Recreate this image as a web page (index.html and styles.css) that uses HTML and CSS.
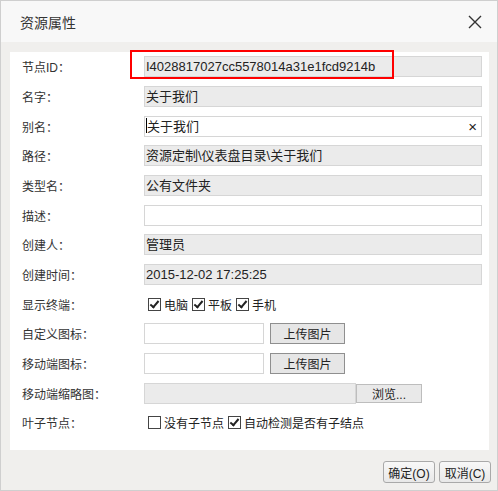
FILE: index.html
```html
<!DOCTYPE html>
<html lang="zh-CN">
<head>
    <meta charset="UTF-8">
    <meta name="viewport" content="width=device-width, initial-scale=1.0">
    <title>资源属性</title>
    <link rel="stylesheet" href="styles.css">
</head>
<body>
    <div class="dialog">
        <div class="dialog-header">
            <span class="dialog-title">资源属性</span>
            <svg class="close-icon" width="14" height="14" viewBox="0 0 14 14">
                <path d="M1 1 L13 13 M13 1 L1 13" stroke="#333" stroke-width="1.4" fill="none"/>
            </svg>
        </div>

        <div class="dialog-body">
            <div class="row">
                <label>节点ID：</label>
                <div class="field readonly">I4028817027cc5578014a31e1fcd9214b</div>
            </div>
            <div class="row">
                <label>名字：</label>
                <div class="field readonly">关于我们</div>
            </div>
            <div class="row">
                <label>别名：</label>
                <div class="field editable"><span class="caret"></span>关于我们<span class="clear">×</span></div>
            </div>
            <div class="row">
                <label>路径：</label>
                <div class="field readonly">资源定制\仪表盘目录\关于我们</div>
            </div>
            <div class="row">
                <label>类型名：</label>
                <div class="field readonly">公有文件夹</div>
            </div>
            <div class="row">
                <label>描述：</label>
                <div class="field editable"></div>
            </div>
            <div class="row">
                <label>创建人：</label>
                <div class="field readonly">管理员</div>
            </div>
            <div class="row">
                <label>创建时间：</label>
                <div class="field readonly">2015-12-02 17:25:25</div>
            </div>
            <div class="row">
                <label>显示终端：</label>
                <div class="checks">
                    <span class="check checked"></span><span class="check-text">电脑</span>
                    <span class="check checked"></span><span class="check-text">平板</span>
                    <span class="check checked"></span><span class="check-text">手机</span>
                </div>
            </div>
            <div class="row">
                <label>自定义图标：</label>
                <div class="field editable short"></div>
                <button class="btn-upload">上传图片</button>
            </div>
            <div class="row">
                <label>移动端图标：</label>
                <div class="field editable short"></div>
                <button class="btn-upload">上传图片</button>
            </div>
            <div class="row">
                <label>移动端缩略图：</label>
                <div class="field readonly thumb"></div>
                <button class="btn-browse">浏览...</button>
            </div>
            <div class="row">
                <label>叶子节点：</label>
                <div class="checks">
                    <span class="check"></span><span class="check-text">没有子节点</span>
                    <span class="check checked"></span><span class="check-text">自动检测是否有子结点</span>
                </div>
            </div>
        </div>

        <div class="dialog-footer">
            <button class="btn">确定(O)</button>
            <button class="btn">取消(C)</button>
        </div>

        <div class="highlight"></div>
    </div>
</body>
</html>
```

FILE: styles.css
```css
body {
    margin: 0;
    font-family: "Liberation Sans", "Noto Sans CJK SC", sans-serif;
    color: #333;
}

.dialog {
    position: relative;
    width: 498px;
    height: 491px;
    box-sizing: border-box;
    border: 1px solid #cfcfcf;
    background: #f0efed;
}

.dialog-header {
    height: 41px;
    background: #f8f8f8;
    display: flex;
    align-items: center;
    justify-content: space-between;
    padding: 0 15px 0 19px;
}

.dialog-title {
    font-size: 14px;
    color: #333;
}

.close-icon {
    display: block;
}

.dialog-body {
    margin: 10px 8px 0 9px;
    height: 398px;
    background: #fff;
    padding: 0 7px 0 12px;
    box-sizing: border-box;
}

.row {
    height: 29.67px;
    display: flex;
    align-items: center;
}

.row label {
    width: 122px;
    flex-shrink: 0;
    font-size: 12px;
    color: #333;
}

.field {
    flex: 1;
    height: 21px;
    box-sizing: border-box;
    border: 1px solid #d6d6d6;
    font-size: 13px;
    line-height: 19px;
    padding-left: 1px;
    color: #222;
    position: relative;
    white-space: nowrap;
}

.readonly {
    background: #ebebeb;
}

.editable {
    background: #fff;
}

.caret {
    display: inline-block;
    width: 1px;
    height: 15px;
    background: #000;
    vertical-align: -2px;
}

.clear {
    position: absolute;
    right: 4px;
    top: 0;
    font-size: 15px;
    color: #222;
}

.field.short {
    flex: none;
    width: 120px;
}

.field.thumb {
    flex: none;
    width: 212px;
}

.btn-upload {
    margin-left: 6px;
    width: 75px;
    height: 21px;
    border: 1px solid #8f8f8f;
    background: #e6e6e6;
    font-family: inherit;
    font-size: 12px;
    color: #222;
    padding: 0;
}

.btn-browse {
    width: 66px;
    height: 19px;
    border: 1px solid #bdbdbd;
    background: #e9e9e9;
    font-family: inherit;
    font-size: 12px;
    color: #222;
    padding: 0;
}

.checks {
    display: flex;
    align-items: center;
    padding-left: 4px;
    font-size: 12px;
    color: #222;
}

.check {
    width: 11px;
    height: 11px;
    border: 1px solid #444;
    background: #fff;
    margin-right: 3px;
    position: relative;
}

.check.checked:after {
    content: "";
    position: absolute;
    left: 3px;
    top: 0;
    width: 3px;
    height: 7px;
    border: solid #222;
    border-width: 0 2px 2px 0;
    transform: rotate(40deg);
}

.check-text {
    margin-right: 4px;
}

.dialog-footer {
    display: flex;
    justify-content: flex-end;
    gap: 4px;
    padding: 11px 6px 0 0;
}

.btn {
    width: 52px;
    height: 22px;
    padding: 0;
    border: 1px solid #a9a9a9;
    border-radius: 3px;
    background: linear-gradient(#f8f8f8, #e8e8e8);
    font-family: inherit;
    font-size: 12px;
    color: #222;
}

.highlight {
    position: absolute;
    left: 129px;
    top: 49px;
    width: 264px;
    height: 29px;
    border: 2px solid #f00;
    box-sizing: border-box;
}
```
